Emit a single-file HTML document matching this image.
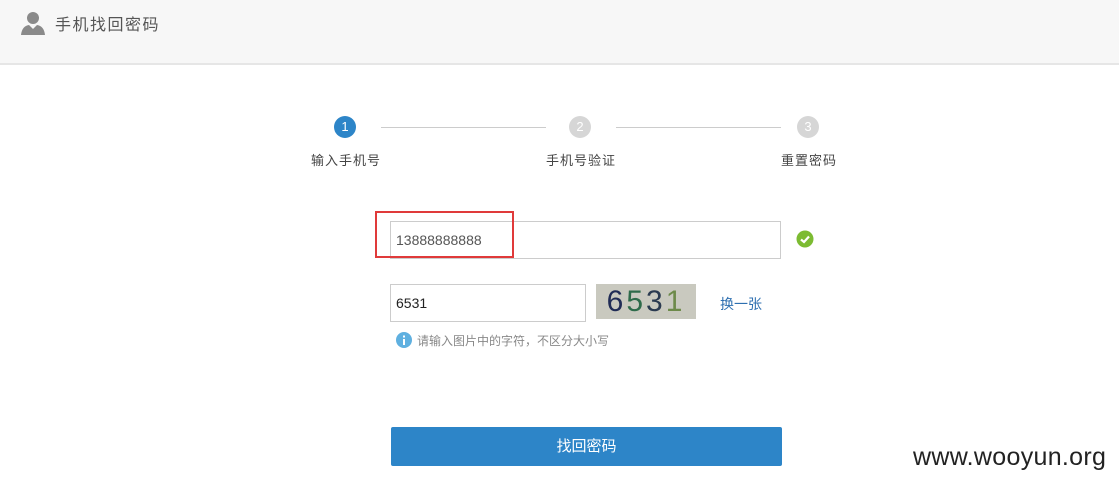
<!DOCTYPE html>
<html><head><meta charset="utf-8"><style>
body{margin:0;width:1119px;height:486px;background:#fff;position:relative;overflow:hidden;font-family:"Liberation Sans","Noto Sans CJK SC",sans-serif;}
.hdr{position:absolute;left:0;top:0;width:1119px;height:63px;background:#f7f7f7;border-bottom:2px solid #e6e6e6;}
.a{position:absolute;}
.t{font-size:16px;color:#555;letter-spacing:1.5px;}
.c{position:absolute;width:22px;height:22px;border-radius:50%;color:#fff;font-size:13px;text-align:center;line-height:22px;}
.ln{position:absolute;height:1px;background:#ccc;top:127px;}
.lbl{position:absolute;font-size:13px;color:#444;top:150px;letter-spacing:1px;}
.inp{position:absolute;border:1px solid #ccc;box-sizing:border-box;background:#fff;font-size:14px;padding-left:5px;}
</style></head><body>
<div class="hdr"></div>
<svg class="a" style="left:20px;top:11px" width="26" height="24" viewBox="0 0 26 24"><circle cx="13" cy="7" r="6" fill="#8a8a8a"/><path d="M1 24 Q2 15 9 14 L13 18 L17 14 Q24 15 25 24Z" fill="#8a8a8a"/></svg>
<div class="a t" style="left:55px;top:11px">手机找回密码</div>
<div class="c" style="left:334px;top:116px;background:#2d85c8">1</div>
<div class="c" style="left:569px;top:116px;background:#d6d6d6">2</div>
<div class="c" style="left:797px;top:116px;background:#d6d6d6">3</div>
<div class="ln" style="left:381px;width:165px"></div>
<div class="ln" style="left:616px;width:165px"></div>
<div class="lbl" style="left:311px">输入手机号</div>
<div class="lbl" style="left:546px">手机号验证</div>
<div class="lbl" style="left:781px">重置密码</div>
<div class="inp" style="left:390px;top:221px;width:391px;height:38px;line-height:36px;color:#555">13888888888</div>
<div class="a" style="left:375px;top:211px;width:135px;height:43px;border:2px solid #e03a3a"></div>
<svg class="a" style="left:796px;top:230px" width="18" height="18"><circle cx="9" cy="9" r="8.5" fill="#7cbb32"/><path d="M5 9.5 L8 12 L13 6.5" stroke="#fff" stroke-width="2.2" fill="none"/></svg>
<div class="inp" style="left:390px;top:284px;width:196px;height:38px;line-height:36px;color:#222">6531</div>
<div class="a" style="left:596px;top:284px;width:100px;height:35px;background:#c9c9bf;font-family:'Liberation Sans',sans-serif;font-size:30px;letter-spacing:3px;line-height:35px;text-align:center"><span style="color:#1f2b55">6</span><span style="color:#2e6b4a">5</span><span style="color:#2a3a50">3</span><span style="color:#6d8a4a">1</span></div>
<div class="a" style="left:720px;top:294px;font-size:14px;color:#2d6fb0">换一张</div>
<svg class="a" style="left:396px;top:332px" width="16" height="16"><circle cx="8" cy="8" r="8" fill="#5fb0e0"/><rect x="7" y="7" width="2" height="6" fill="#fff"/><rect x="7" y="3.5" width="2" height="2" fill="#fff"/></svg>
<div class="a" style="left:417px;top:332px;font-size:12px;color:#888">请输入图片中的字符，不区分大小写</div>
<div class="a" style="left:391px;top:427px;width:391px;height:39px;background:#2d85c8;border-radius:2px;color:#fff;font-size:15px;text-align:center;line-height:39px">找回密码</div>
<div class="a" style="left:913px;top:443px;font-size:25px;color:#222;letter-spacing:0.3px">www.wooyun.org</div>
</body></html>
